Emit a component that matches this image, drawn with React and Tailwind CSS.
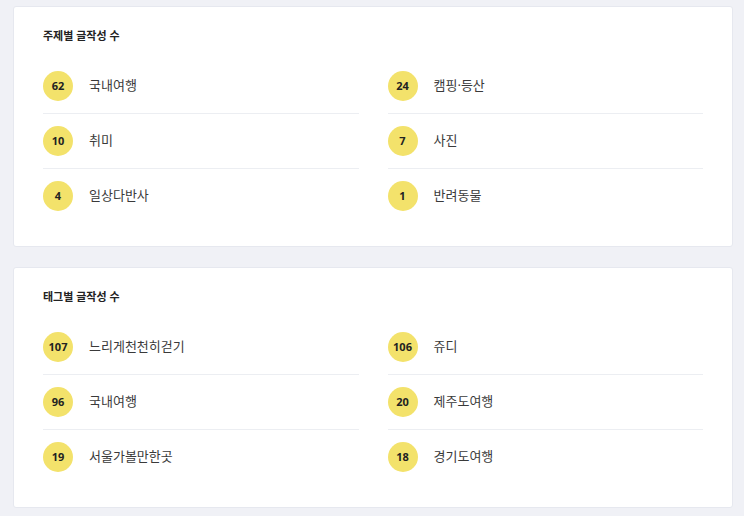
const subjects = [
  { count: 62, name: '국내여행' },
  { count: 24, name: '캠핑·등산' },
  { count: 10, name: '취미' },
  { count: 7, name: '사진' },
  { count: 4, name: '일상다반사' },
  { count: 1, name: '반려동물' },
]

const tags = [
  { count: 107, name: '느리게천천히걷기' },
  { count: 106, name: '쥬디' },
  { count: 96, name: '국내여행' },
  { count: 20, name: '제주도여행' },
  { count: 19, name: '서울가볼만한곳' },
  { count: 18, name: '경기도여행' },
]

const StatCard = ({ title, items }) => {
  return (
    <section className="bg-white rounded-[3px] border border-[#e6e8ef] px-[29px] pt-[21px] pb-[23px]">
      <h2 className="text-[11px] leading-4 font-bold text-[#222] mb-[15px]">{title}</h2>
      <ul className="grid grid-cols-2 gap-x-[29px]">
        {items.map((item, idx) => (
          <li
            key={idx}
            className={`flex items-center py-3 ${idx < items.length - 2 ? 'border-b border-[#eceef2]' : ''}`}
          >
            <span className="w-[30px] h-[30px] rounded-full bg-[#f3e26b] flex items-center justify-center text-[11px] font-bold text-[#222] shrink-0 font-['Open_Sans',sans-serif]">
              {item.count}
            </span>
            <span className="ml-4 text-[13px] text-[#3a3a3a]">{item.name}</span>
          </li>
        ))}
      </ul>
    </section>
  )
}

export default function App() {
  return (
    <div className="min-h-[516px] bg-[#f0f1f6] pl-[13px] pr-[11px] pt-[6px] pb-[9px] flex flex-col gap-[20px] font-['Noto_Sans','Noto_Sans_CJK_KR',sans-serif]">
      <StatCard title="주제별 글작성 수" items={subjects} />
      <StatCard title="태그별 글작성 수" items={tags} />
    </div>
  )
}
